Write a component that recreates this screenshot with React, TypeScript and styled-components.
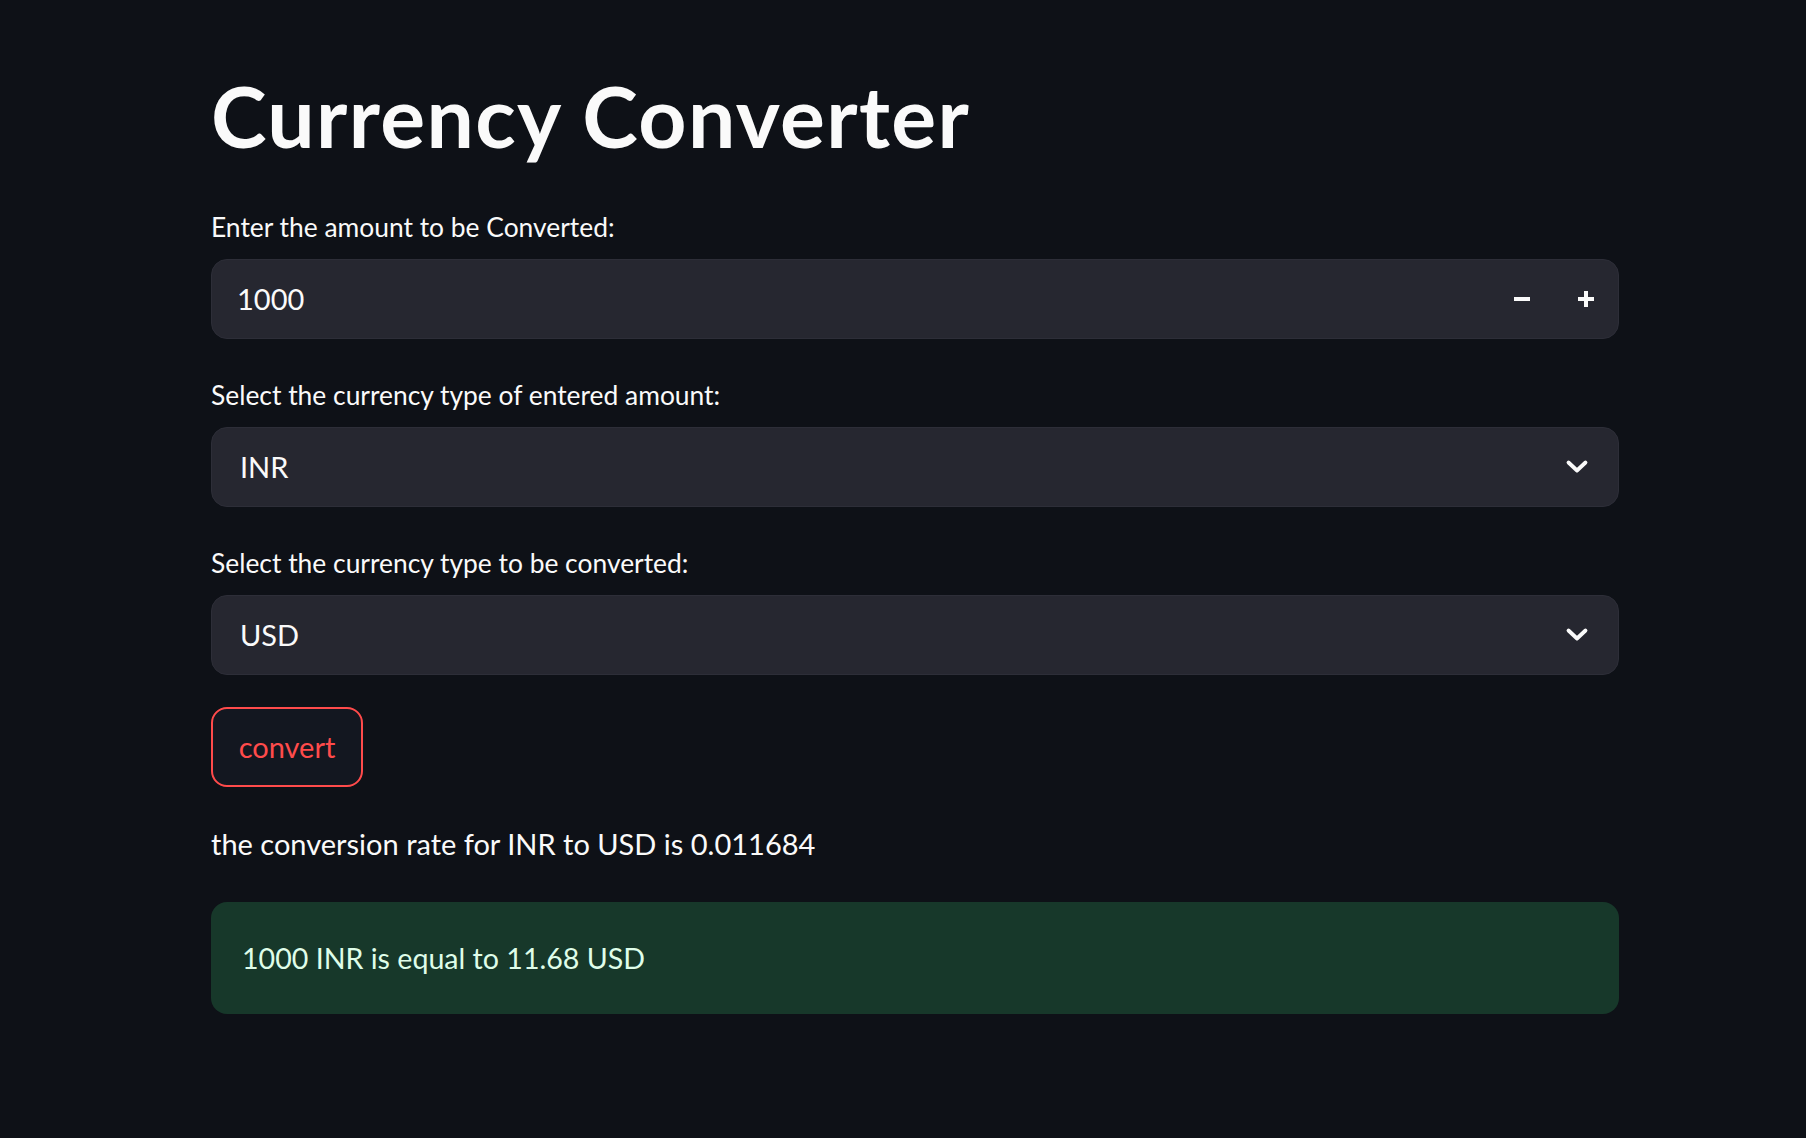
import React from "react";
import styled, { createGlobalStyle } from "styled-components";

const Global = createGlobalStyle`
  html, body { margin: 0; padding: 0; background: #0e1117; }
  body {
    font-family: Lato, "Noto Sans", sans-serif;
    color: #fafafa;
    -webkit-font-smoothing: antialiased;
  }
  * { box-sizing: border-box; }
`;

const Main = styled.main`
  width: ${211 + 1408}px;
  padding: 66px 0 120px 211px;
  display: flex;
  flex-direction: column;
`;

const Title = styled.h1`
  margin: 0 0 45px;
  font-size: 84px;
  font-weight: 700;
  line-height: 1.2;
  letter-spacing: 1.35px;
  color: #fafafa;
`;

const Field = styled.div<{ $after: number }>`
  display: flex;
  flex-direction: column;
  gap: 15.5px;
  margin-bottom: ${(p) => p.$after}px;
`;

const Label = styled.label`
  font-size: 26.4px;
  line-height: 1.2;
  color: #fafafa;
`;

const Control = styled.div`
  height: 80px;
  border-radius: 16px;
  background: #262730;
  border: 1px solid #2d2e38;
  display: flex;
  align-items: center;
  overflow: hidden;
`;

const NumberField = styled.input`
  flex: 1;
  min-width: 0;
  height: 100%;
  padding: 0 0 0 25px;
  border: none;
  outline: none;
  background: transparent;
  color: #fafafa;
  font-family: inherit;
  font-size: 29px;
  line-height: 1.2;
`;

const StepButton = styled.button`
  width: 64px;
  height: 100%;
  flex: none;
  display: flex;
  align-items: center;
  justify-content: center;
  padding: 0;
  border: none;
  background: transparent;
  color: #fafafa;
  cursor: pointer;
`;

const SelectValue = styled.div`
  flex: 1;
  padding-left: 28px;
  font-size: 29px;
  line-height: 1.2;
  color: #fafafa;
`;

const Chevron = styled.span`
  flex: none;
  width: 24px;
  margin-right: 29px;
  display: flex;
  align-items: center;
  justify-content: center;
`;

const ConvertButton = styled.button`
  align-self: flex-start;
  width: 152px;
  height: 80px;
  margin-bottom: 40px;
  padding: 0;
  border: 2px solid #ff4b4b;
  border-radius: 16px;
  background: #131720;
  color: #ff4b4b;
  font-family: inherit;
  font-size: 29px;
  line-height: 1.2;
  cursor: pointer;
`;

const RateText = styled.p`
  margin: 0 0 40px;
  font-size: 29px;
  line-height: 1.2;
  color: #fafafa;
`;

const SuccessBox = styled.div`
  border-radius: 16px;
  background: #17382a;
  padding: 39px 31px 39px;
  font-size: 28.6px;
  line-height: 1.2;
  color: #dffde9;
`;

const MinusIcon = () => (
  <svg width="16" height="16" viewBox="0 0 16 16" aria-hidden>
    <rect x="0" y="6" width="16" height="4" fill="currentColor" />
  </svg>
);

const PlusIcon = () => (
  <svg width="16" height="16" viewBox="0 0 16 16" aria-hidden>
    <rect x="0" y="6" width="16" height="4" fill="currentColor" />
    <rect x="6" y="0" width="4" height="16" fill="currentColor" />
  </svg>
);

const ChevronIcon = () => (
  <svg width="24" height="16" viewBox="0 0 24 16" aria-hidden>
    <path
      d="M3.5 3.5 L12 11.5 L20.5 3.5"
      fill="none"
      stroke="#fafafa"
      strokeWidth="3.8"
      strokeLinecap="round"
      strokeLinejoin="round"
    />
  </svg>
);

const SelectBox = ({ value }: { value: string }) => (
  <Control>
    <SelectValue>{value}</SelectValue>
    <Chevron>
      <ChevronIcon />
    </Chevron>
  </Control>
);

export default function App() {
  return (
    <>
      <Global />
      <Main>
        <Title>Currency Converter</Title>
        <Field $after={41}>
          <Label>Enter the amount to be Converted:</Label>
          <Control>
            <NumberField type="text" defaultValue="1000" />
            <StepButton aria-label="decrement">
              <MinusIcon />
            </StepButton>
            <StepButton aria-label="increment">
              <PlusIcon />
            </StepButton>
          </Control>
        </Field>
        <Field $after={41}>
          <Label>Select the currency type of entered amount:</Label>
          <SelectBox value="INR" />
        </Field>
        <Field $after={32}>
          <Label>Select the currency type to be converted:</Label>
          <SelectBox value="USD" />
        </Field>
        <ConvertButton>convert</ConvertButton>
        <RateText>the conversion rate for INR to USD is 0.011684</RateText>
        <SuccessBox>1000 INR is equal to 11.68 USD</SuccessBox>
      </Main>
    </>
  );
}
